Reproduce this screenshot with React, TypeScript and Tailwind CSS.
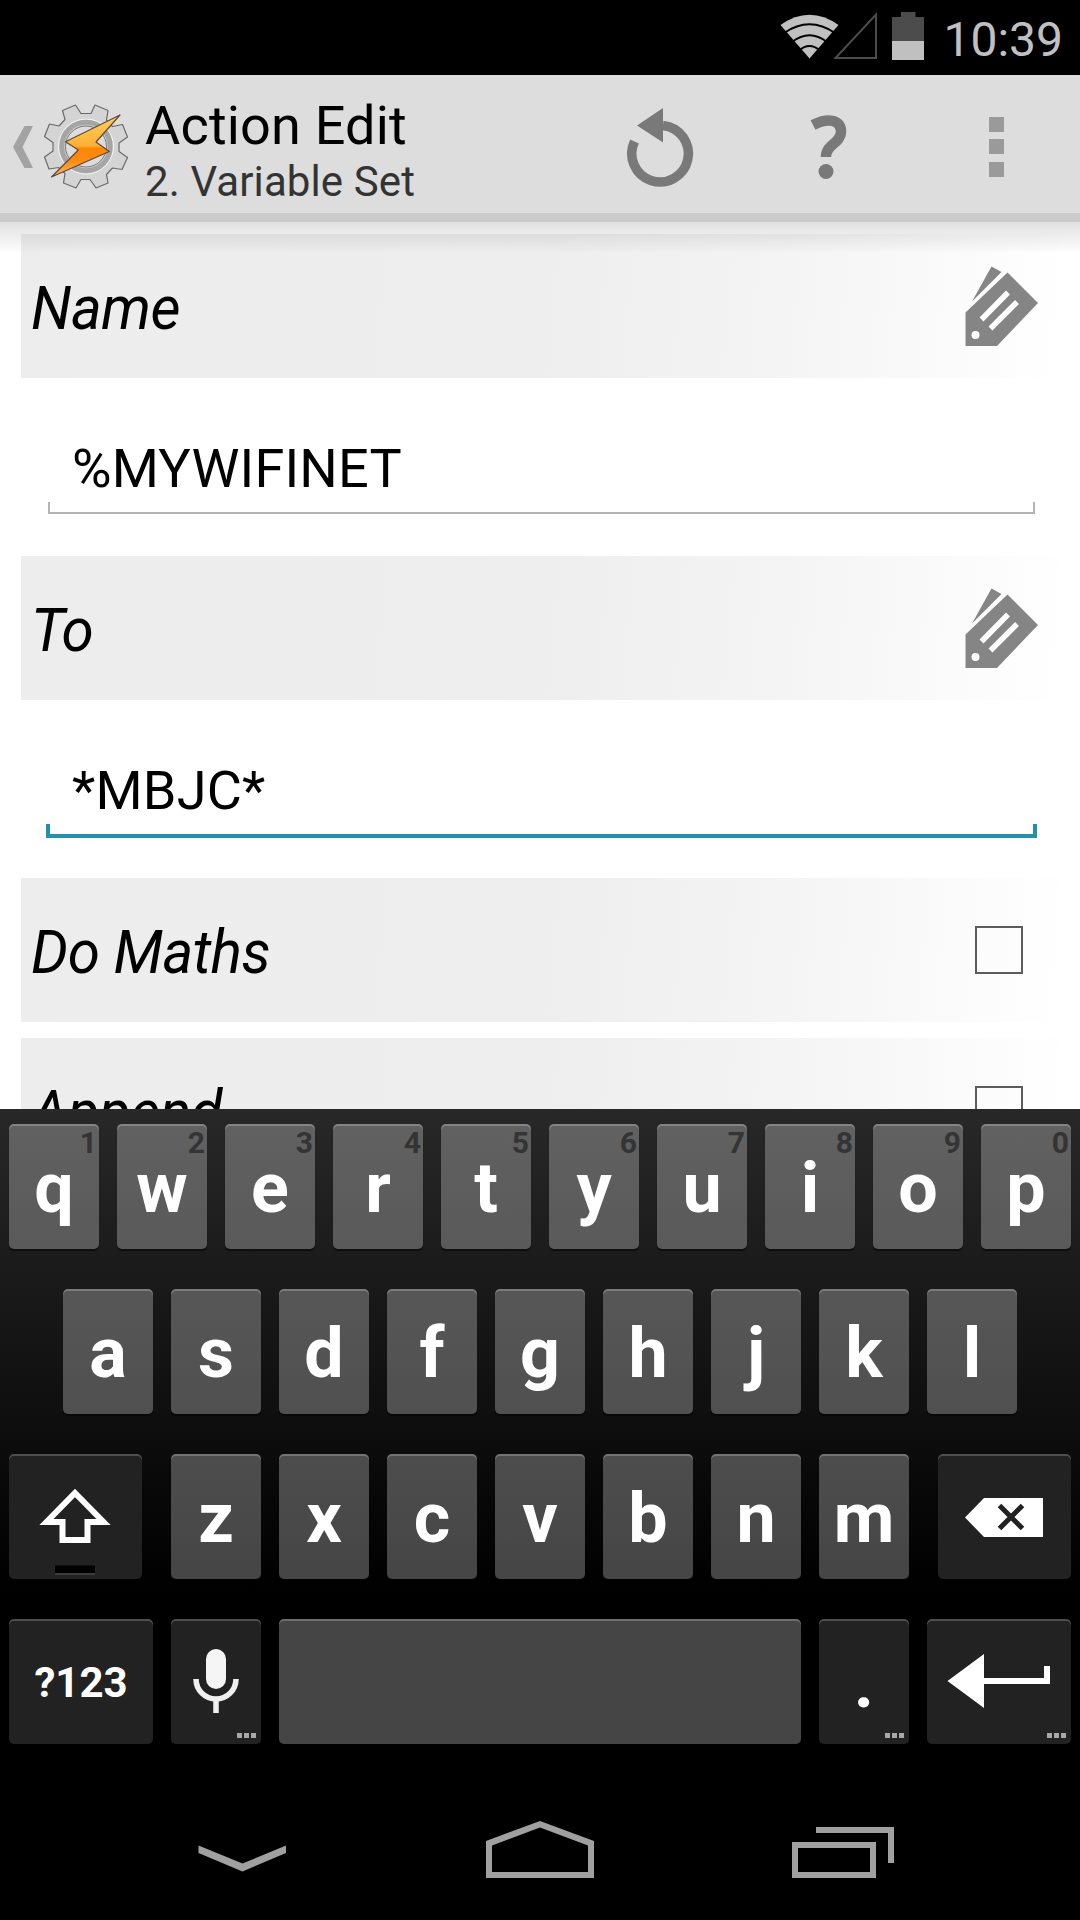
import React from "react";

const ROBOTO = "font-[Roboto,'Noto_Sans',sans-serif]";

function StatusBar() {
  return (
    <div className="flex h-[75px] shrink-0 items-center justify-end bg-black pr-[17px]">
      <svg width="159" height="75" viewBox="770 0 159 75" className="shrink-0">
        <path d="M780.5 25 Q809.5 4.5 838.5 25 L809.5 58.5 Z" fill="#c0c0c0" />
        <g fill="none" stroke="#000" strokeWidth="2">
          <path d="M784 33 Q809.5 15.5 835 33" />
          <path d="M792 42 Q809.5 28.5 827 42" />
          <path d="M799 50.5 Q809.5 41.5 820 50.5" />
        </g>
        <path d="M835.5 58 H876 V14.5 Z" fill="none" stroke="#4c4c4c" strokeWidth="2" />
        <path d="M892 17 H901 V12 H915.5 V17 H924 V41 H892 Z" fill="#4c4c4c" />
        <path d="M892 41 H924 V60 H892 Z" fill="#c0c0c0" />
      </svg>
      <span className="mt-[4px] ml-[14px] text-[48px] leading-none text-[#c0c0c0]">10:39</span>
    </div>
  );
}

function GearBolt() {
  return (
    <svg width="92" height="92" viewBox="40 100 92 92" className="mt-[4px] shrink-0">
      <defs>
        <linearGradient id="bolt" x1="0" y1="0" x2="0" y2="1">
          <stop offset="0" stopColor="#ffd060" />
          <stop offset="0.5" stopColor="#fdb034" />
          <stop offset="0.54" stopColor="#fb860a" />
          <stop offset="0.75" stopColor="#fc8c14" />
          <stop offset="1" stopColor="#fbb878" />
        </linearGradient>
      </defs>
      <path
        d="M75.5 105 L81 113.5 H91 L95 105 L108 110.5 L106.5 120 L112.500 126.5 L122.5 124.5 L127.5 137 L119 143 V151.5 L127.5 157.5 L122 169.5 L112.5 168 L106.5 174.5 L108 183 L96 188 L90 179.500 H81 L76 188 L63.5 183 L65 173.5 L58.5 167.5 L49 169 L44.5 157 L53 151 V142.5 L44.5 136.5 L49.5 124 L59 126 L65 119.5 L62.5 110.5 Z"
        fill="#d4d4d4"
        stroke="#6a6a6a"
        strokeWidth="1.2"
        strokeLinejoin="round"
      />
      <circle cx="86" cy="146.5" r="27.5" fill="none" stroke="#f5f5f5" strokeWidth="1" />
      <circle cx="86" cy="146.5" r="24.2" fill="none" stroke="#a5a5a5" strokeWidth="5" />
      <circle cx="86" cy="146.5" r="20.5" fill="#dcdcdc" stroke="#777" strokeWidth="1" />
      <path
        d="M120 115 L65.5 141.8 L78.300 150 L51.5 177 L109.3 151.5 L96 142 Z"
        fill="url(#bolt)"
        stroke="#5f4a36"
        strokeWidth="1.2"
        strokeLinejoin="round"
      />
    </svg>
  );
}

function ActionBar() {
  return (
    <header className="flex h-[147px] shrink-0 items-start border-b-[9px] border-[#cbcbcb] bg-[#dddddd]">
      <svg width="40" height="138" viewBox="0 75 40 138" className="shrink-0">
        <path d="M24.5 126 H33 L22.5 147 L33 168 H24.5 L13 147 Z" fill="#a3a3a3" />
      </svg>
      <div className="flex h-[138px] items-center">
        <GearBolt />
      </div>
      <div className="ml-[13px] flex w-[430px] flex-col pt-[19px]">
        <span className="text-[54px] leading-[63px] tracking-[0.2px] text-black">Action Edit</span>
        <span className="text-[42px] leading-[49px] tracking-[0.1px] text-[#333333]">2. Variable Set</span>
      </div>
      <svg width="505" height="138" viewBox="575 75 505 138" className="shrink-0">
        <path d="M634.5 141.5 A28.3 28.3 0 1 0 663 125.500" fill="none" stroke="#797979" strokeWidth="9.5" />
        <path d="M663 108 V142.5 L637 125.5 Z" fill="#797979" />
        <path d="M813 125 C827 117.5 841.5 119 841 132 C840.5 144 826 144 826 157" fill="none" stroke="#797979" strokeWidth="10.5" />
        <circle cx="826" cy="171.5" r="7.5" fill="#797979" />
        <path d="M989 117 h15 v15 h-15z M989 139 h15 v15 h-15z M989 162 h15 v15 h-15z" fill="#9a9a9a" />
      </svg>
    </header>
  );
}

function TagIcon() {
  return (
    <svg width="76" height="84" viewBox="963 264 76 84" className="mr-[20px]">
      <path d="M991.5 266.5 L1001.5 272 L972 301.5 Z" fill="#858585" />
      <path d="M1007.5 272.5 L1038 303 L997 346 H965.5 V312.5 Z" fill="#858585" />
      <path d="M981.5 319.5 L1008 292.5 M990.5 328.5 L1017 302" stroke="#fff" strokeWidth="5.5" />
      <circle cx="975.5" cy="335" r="4" fill="#fff" />
    </svg>
  );
}

function Checkbox() {
  return <span className="mr-[36px] size-[48px] border-2 border-[#5c5c5c]" />;
}

function SectionRow({ label, children }: { label: string; children: React.ReactNode }) {
  return (
    <div className="mx-[21px] flex h-[144px] shrink-0 items-center justify-between bg-[linear-gradient(95deg,#ededed_0%,#eeeeee_50%,#f4f4f4_73%,#fbfbfb_90%,#ffffff_100%)] pl-[10px]">
      <span className="mt-[6px] origin-left scale-x-[0.974] text-[60px] leading-none tracking-[-0.5px] text-black italic">{label}</span>
      {children}
    </div>
  );
}

function Field({ value, focused = false }: { value: string; focused?: boolean }) {
  return (
    <div className="flex h-[178px] shrink-0 flex-col pt-[59px] pr-[43px] pl-[46px]">
      <span className="h-[64px] pl-[26px] text-[54px] leading-[64px] tracking-[0.2px] text-black">{value}</span>
      {focused ? (
        <span className="mt-[1px] h-[14px] border-x-4 border-b-4 border-[#258fae]" />
      ) : (
        <span className="mx-[2px] mt-[1px] h-[12px] border-x-2 border-b-2 border-[#b4b4b4]" />
      )}
    </div>
  );
}

function Form() {
  return (
    <main className="relative flex h-[887px] shrink-0 flex-col overflow-hidden bg-white pt-[12px]">
      <SectionRow label="Name"><TagIcon /></SectionRow>
      <Field value="%MYWIFINET" />
      <SectionRow label="To"><TagIcon /></SectionRow>
      <Field value="*MBJC*" focused />
      <SectionRow label="Do Maths"><Checkbox /></SectionRow>
      <div className="h-[16px] shrink-0" />
      <SectionRow label="Append"><Checkbox /></SectionRow>
      <div className="absolute inset-x-0 top-0 h-[32px] bg-gradient-to-b from-black/12 to-transparent" />
    </main>
  );
}

const LIGHT =
  "relative flex h-[125px] shrink-0 items-center justify-center rounded-[5px] bg-white/27 text-white shadow-[inset_0_2px_0_rgba(255,255,255,0.22),0_2px_1px_rgba(0,0,0,0.5)]";
const DARK =
  "relative flex h-[125px] shrink-0 items-center justify-center rounded-[5px] bg-[#222222] text-white shadow-[inset_0_2px_0_rgba(255,255,255,0.2)]";

function LetterKey({ letter, hint }: { letter: string; hint?: string }) {
  return (
    <div className={`${LIGHT} w-[90px]`}>
      <span className="mt-[3px] text-[70px] leading-none font-bold">{letter}</span>
      {hint && <span className="absolute top-[8px] right-[2px] text-[30px] leading-[22px] font-bold text-[#343434]">{hint}</span>}
    </div>
  );
}

function More() {
  return (
    <span className="absolute right-[5px] bottom-[6px] flex gap-[2px]">
      <i className="size-[5px] bg-[#a8a8a8]" />
      <i className="size-[5px] bg-[#a8a8a8]" />
      <i className="size-[5px] bg-[#a8a8a8]" />
    </span>
  );
}

function Keyboard() {
  return (
    <section className="flex h-[667px] shrink-0 flex-col gap-[40px] bg-[linear-gradient(180deg,#282828_0px,#000000_480px)] pt-[15px]">
      <div className="flex gap-[18px] px-[9px]">
        {"qwertyuiop".split("").map((c, i) => (
          <LetterKey key={c} letter={c} hint={String((i + 1) % 10)} />
        ))}
      </div>
      <div className="flex gap-[18px] px-[63px]">
        {"asdfghjkl".split("").map((c) => <LetterKey key={c} letter={c} />)}
      </div>
      <div className="flex justify-between px-[9px]">
        <div className={`${DARK} w-[133px]`}>
          <svg width="133" height="125" viewBox="9 1454 133 125">
            <path d="M75 1493 L103.5 1522 H87.5 V1540 H62.5 V1522 H46.5 Z" fill="none" stroke="#fff" strokeWidth="6" />
            <path d="M55 1565.5 H95 V1573 H55 Z" fill="#000" />
            <path d="M55 1574 H95" stroke="#555" strokeWidth="1" />
          </svg>
        </div>
        <div className="flex gap-[18px]">
          {"zxcvbnm".split("").map((c) => <LetterKey key={c} letter={c} />)}
        </div>
        <div className={`${DARK} w-[133px]`}>
          <svg width="133" height="125" viewBox="938 1454 133 125">
            <path d="M965 1517.5 L984 1498 H1043 V1537 H984 Z" fill="#fff" />
            <path d="M999.5 1505.5 L1022.5 1528.500 M1022.5 1505.5 L999.5 1528.500" stroke="#222" strokeWidth="5" />
          </svg>
        </div>
      </div>
      <div className="flex gap-[18px] px-[9px]">
        <div className={`${DARK} w-[144px]`}>
          <span className="mt-[3px] text-[42px] leading-none font-bold">?123</span>
        </div>
        <div className={`${DARK} w-[90px]`}>
          <svg width="90" height="125" viewBox="171 1619 90 125">
            <rect x="206" y="1649" width="20" height="40" rx="10" fill="#f5f5f5" />
            <path d="M196 1679 A20 20 0 0 0 236 1679 M216 1699 V1713" fill="none" stroke="#f0f0f0" strokeWidth="5.5" />
          </svg>
          <More />
        </div>
        <div className={`${LIGHT} w-[522px]`} />
        <div className={`${DARK} w-[90px]`}>
          <span className="mt-[3px] text-[70px] leading-none font-bold">.</span>
          <More />
        </div>
        <div className={`${DARK} w-[144px]`}>
          <svg width="144" height="125" viewBox="927 1619 144 125">
            <path d="M947.5 1681 L984 1654 V1678 H1044 V1666 H1050 V1684 H984 V1708 Z" fill="#fff" />
          </svg>
          <More />
        </div>
      </div>
    </section>
  );
}

function NavBar() {
  return (
    <nav className="flex h-[144px] shrink-0 bg-black">
      <svg width="1080" height="144" viewBox="0 1776 1080 144">
        <g fill="#a0a0a0">
          <path d="M198.5 1845.5 L242.5 1863.5 L286 1845.5 V1853 L242.5 1871.500 L198.5 1853 Z" />
          <path fillRule="evenodd" d="M540 1821 L594 1841 V1878 H486 V1841 Z M540 1827.5 L492 1845.5 V1872 H588 V1845.5 Z" />
          <path d="M816 1827 H894 V1863 H888 V1833 H816 Z" />
          <path fillRule="evenodd" d="M792 1842 H876 V1878 H792 Z M798 1848 V1872 H870 V1848 Z" />
        </g>
      </svg>
    </nav>
  );
}

export default function App() {
  return (
    <div className={`flex h-[1920px] w-[1080px] flex-col overflow-hidden bg-black ${ROBOTO}`}>
      <StatusBar />
      <ActionBar />
      <Form />
      <Keyboard />
      <NavBar />
    </div>
  );
}
